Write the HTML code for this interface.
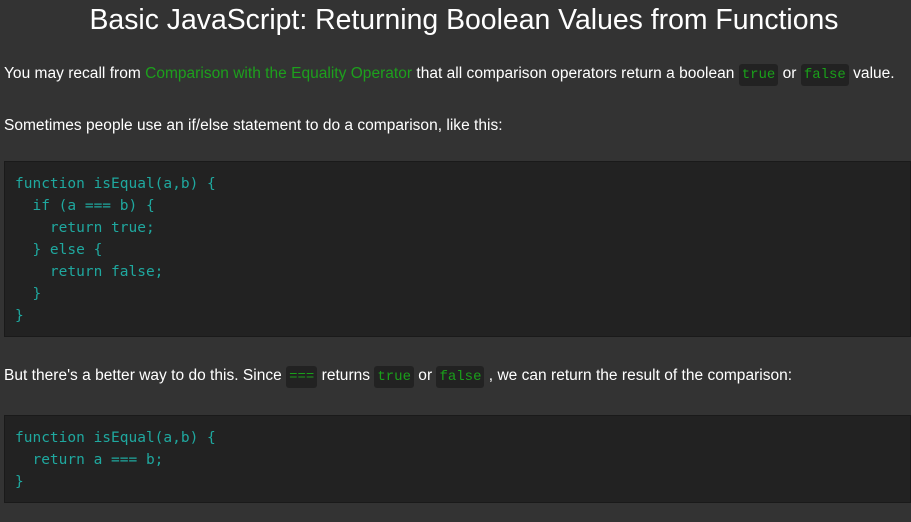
<!DOCTYPE html>
<html><head><style>
body{margin:0;background:#333;width:911px;height:522px;overflow:hidden;font-family:"Liberation Sans",sans-serif;color:#fff;}
h1{margin:0;position:absolute;top:3px;left:0;width:928px;text-align:center;font-weight:normal;font-size:28.4px;line-height:34px;}
p{position:absolute;left:4px;margin:0;font-size:15.5px;letter-spacing:0.02px;line-height:20px;white-space:nowrap;}
a{color:#1da01d;text-decoration:none;}
code{font-family:"Liberation Mono",monospace;background:#222;color:#1aa01a;border-radius:3px;padding:3px 3px;font-size:14px;letter-spacing:0;}
pre{position:absolute;left:4px;width:907px;margin:0;background:#222;border:1px solid #1a1a1a;box-sizing:border-box;font-family:"DejaVu Sans Mono","Liberation Mono",monospace;font-size:14.5px;line-height:22px;color:#1fa89f;padding:11px 10px;}
</style></head><body>
<h1>Basic JavaScript: Returning Boolean Values from Functions</h1>
<p style="top:64px">You may recall from <a>Comparison with the Equality Operator</a> that all comparison operators return a boolean <code>true</code> or <code>false</code> value.</p>
<p style="top:116px">Sometimes people use an if/else statement to do a comparison, like this:</p>
<pre style="top:161px;height:176px">function isEqual(a,b) {
  if (a === b) {
    return true;
  } else {
    return false;
  }
}</pre>
<p style="top:366px">But there's a better way to do this. Since <code>===</code> returns <code>true</code> or <code>false</code> , we can return the result of the comparison:</p>
<pre style="top:415px;height:88px">function isEqual(a,b) {
  return a === b;
}</pre>
</body></html>
